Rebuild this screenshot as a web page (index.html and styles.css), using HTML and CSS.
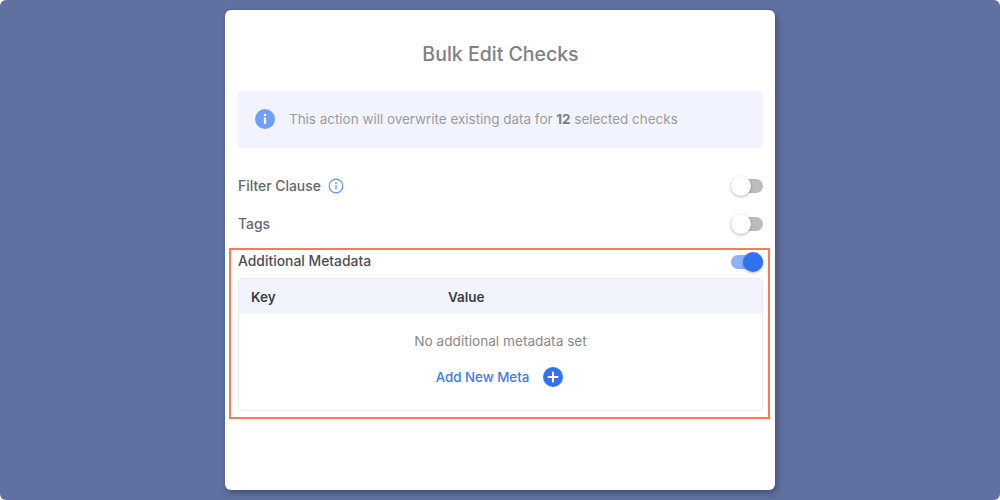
FILE: index.html
```html
<!DOCTYPE html>
<html lang="en">
<head>
    <meta charset="UTF-8">
    <meta name="viewport" content="width=device-width, initial-scale=1.0">
    <title>Bulk Edit Checks</title>
    <link rel="stylesheet" href="styles.css">
</head>
<body>
    <div class="modal">
        <h1 class="title">Bulk Edit Checks</h1>
        <div class="notice">
            <svg class="notice-icon" width="20" height="20" viewBox="0 0 20 20">
                <circle cx="10" cy="10" r="10" fill="#6f9ffb"/>
                <circle cx="10" cy="6" r="1.3" fill="#fff"/>
                <rect x="8.9" y="8.6" width="2.2" height="6.4" rx="0.6" fill="#fff"/>
            </svg>
            <span>This action will overwrite existing data for <strong>12</strong> selected checks</span>
        </div>
        <div class="row row-filter">
            <div class="label">
                Filter Clause
                <svg width="16" height="16" viewBox="0 0 16 16" fill="none">
                    <circle cx="8" cy="8" r="6.8" stroke="#5b92f8" stroke-width="1.2"/>
                    <circle cx="8" cy="5" r="0.9" fill="#5b92f8"/>
                    <rect x="7.4" y="6.9" width="1.2" height="4.6" fill="#5b92f8"/>
                </svg>
            </div>
            <div class="toggle"><span class="knob"></span></div>
        </div>
        <div class="row row-tags">
            <div class="label">Tags</div>
            <div class="toggle"><span class="knob"></span></div>
        </div>
        <div class="highlight">
            <div class="row row-meta">
                <div class="label">Additional Metadata</div>
                <div class="toggle on"><span class="knob"></span></div>
            </div>
            <div class="meta-table">
                <div class="meta-head">
                    <span class="col-key">Key</span>
                    <span>Value</span>
                </div>
                <div class="meta-empty">No additional metadata set</div>
                <div class="meta-add">
                    Add New Meta
                    <svg width="20" height="20" viewBox="0 0 20 20">
                        <circle cx="10" cy="10" r="10" fill="#2f74ee"/>
                        <path d="M10 5.5v9M5.5 10h9" stroke="#fff" stroke-width="2" stroke-linecap="round"/>
                    </svg>
                </div>
            </div>
        </div>
    </div>
</body>
</html>
```

FILE: styles.css
```css
html {
    background: #fff;
}

body {
    font-family: 'Inter', 'Noto Sans', sans-serif;
    margin: 0;
    height: 500px;
    overflow: hidden;
    background: #6071a1;
    border-radius: 6px;
    box-sizing: border-box;
    padding-top: 10px;
}

.modal {
    width: 550px;
    height: 480px;
    margin: 0 auto;
    padding: 0 12px 0 13px;
    box-sizing: border-box;
    background: #fff;
    border-radius: 6px;
    box-shadow: 2px 3px 6px rgba(40, 45, 80, 0.5);
}

.title {
    margin: 0;
    padding-top: 32px;
    height: 81px;
    box-sizing: border-box;
    line-height: 24px;
    font-size: 19.5px;
    font-weight: 500;
    text-align: center;
    color: #808086;
}

.notice {
    display: flex;
    align-items: center;
    gap: 14px;
    height: 57px;
    padding: 0 0 1px 17px;
    box-sizing: border-box;
    background: #f1f4fe;
    border-radius: 4px;
    font-size: 13.45px;
    color: #9a9ba1;
}

.notice-icon {
    flex-shrink: 0;
}

.notice strong {
    font-weight: 700;
    color: #7d7e84;
}

.row {
    display: flex;
    justify-content: space-between;
    align-items: center;
    height: 24px;
}

.row-filter {
    margin-top: 26px;
}

.row-tags {
    margin-top: 14px;
}

.label {
    display: flex;
    align-items: center;
    gap: 7px;
    font-size: 13.9px;
    font-weight: 500;
    color: #66666c;
}

.toggle {
    position: relative;
    width: 32px;
    height: 14px;
    border-radius: 7px;
    background: #bcbbbd;
}

.knob {
    position: absolute;
    left: 0;
    top: -3px;
    width: 20px;
    height: 20px;
    border-radius: 50%;
    background: #fff;
    box-shadow: 0 1px 3px rgba(0, 0, 0, 0.3);
}

.toggle.on {
    margin-top: 2px;
    background: #8eb2f8;
}

.toggle.on .knob {
    left: 12px;
    background: #2f74ee;
}

.highlight {
    margin: 12px -7px 0 -9px;
    height: 171px;
    padding: 0 5px 0 7px;
    box-sizing: border-box;
    border: 2px solid #ff7a50;
}

.row-meta {
    height: 22px;
    margin-bottom: 6px;
}

.row-meta .label {
    color: #4e4e54;
}

.meta-table {
    height: 133px;
    box-sizing: border-box;
    border: 1px solid #e9e9ec;
    border-radius: 4px;
    text-align: center;
}

.meta-head {
    display: flex;
    align-items: center;
    height: 35px;
    padding-left: 12px;
    background: #f1f4fd;
    font-size: 13.5px;
    font-weight: 600;
    color: #3c3d44;
}

.col-key {
    width: 197px;
    text-align: left;
}

.meta-empty {
    margin-top: 17px;
    line-height: 20px;
    font-size: 13.65px;
    color: #88888d;
}

.meta-add {
    display: flex;
    justify-content: center;
    align-items: center;
    gap: 14px;
    margin-top: 16px;
    padding-right: 2px;
    height: 20px;
    font-size: 13.3px;
    font-weight: 500;
    color: #3b7cf0;
}
```
